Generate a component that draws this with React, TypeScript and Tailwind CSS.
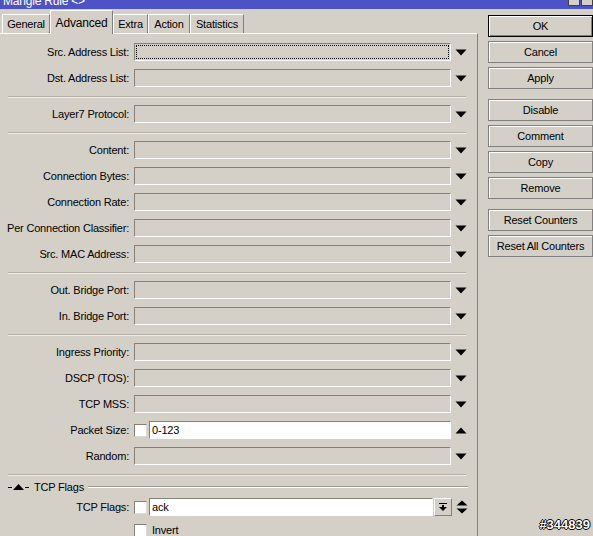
import React from "react";

const font = { fontFamily: '"Liberation Sans", Arial, sans-serif' };

function Arrow({ dir }: { dir: "down" | "up" | "updown" }) {
  if (dir === "updown") {
    return (
      <svg width="12" height="14" viewBox="0 0 12 14" className="ml-[4px]">
        <polygon points="0.5,5.5 11.5,5.5 6,0.5" fill="#000" />
        <polygon points="0.5,8.5 11.5,8.5 6,13.5" fill="#000" />
      </svg>
    );
  }
  return (
    <svg width="12" height="7" viewBox="0 0 12 7" className="ml-[4px]">
      {dir === "down" ? (
        <polygon points="0.5,0.5 11.5,0.5 6,6.5" fill="#000" />
      ) : (
        <polygon points="0.5,6.5 11.5,6.5 6,0.5" fill="#000" />
      )}
    </svg>
  );
}

function Box({ width, white, focus, value }: { width: number; white?: boolean; focus?: boolean; value?: string }) {
  return (
    <div
      className={
        "relative h-[18px] border border-t-[#848179] border-l-[#848179] border-b-white border-r-white flex items-center pl-[2px] " +
        (white ? "bg-white" : "bg-[#d4d0c8]")
      }
      style={{ width }}
    >
      {focus && <div className="absolute inset-[1px] border border-dotted border-black" />}
      {value && <span className="text-[11px] leading-none text-black">{value}</span>}
    </div>
  );
}

function Check() {
  return <div className="w-[13px] h-[13px] bg-white border border-t-[#848179] border-l-[#848179] border-b-[#dcdad5] border-r-[#dcdad5]" />;
}

function Row({
  label,
  arrow = "down",
  focus,
  check,
  white,
  value,
}: {
  label: string;
  arrow?: "down" | "up" | "updown";
  focus?: boolean;
  check?: boolean;
  white?: boolean;
  value?: string;
}) {
  return (
    <div className="flex items-center h-[26px]">
      <div className="w-[129px] text-right text-[11px] whitespace-nowrap">{label}:</div>
      <div className="ml-[5px] flex items-center">
        {check ? (
          <>
            <Check />
            <div className="ml-[2px]">
              <Box width={302} white={white} value={value} />
            </div>
          </>
        ) : (
          <Box width={317} focus={focus} />
        )}
        <Arrow dir={arrow} />
      </div>
    </div>
  );
}

function Sep() {
  return (
    <div className="h-[10px] pt-[5px] pl-[8px]">
      <div className="w-[458px] h-px bg-[#b3afa7]" />
      <div className="w-[458px] h-px bg-[#eeece8]" />
    </div>
  );
}

function Btn({ label, def, className = "" }: { label: string; def?: boolean; className?: string }) {
  return (
    <div
      className={
        "w-[105px] h-[22px] flex items-center justify-center text-[11px] " +
        (def
          ? "border border-black shadow-[inset_1px_1px_0_#fff,inset_-1px_-1px_0_#808080]"
          : "border border-[#808080] shadow-[inset_1px_1px_0_#fff]") +
        " " +
        className
      }
    >
      {label}
    </div>
  );
}

const tabs = [
  { name: "General", w: 48 },
  { name: "Advanced", w: 63, active: true },
  { name: "Extra", w: 35 },
  { name: "Action", w: 42 },
  { name: "Statistics", w: 54 },
];

export default function App() {
  return (
    <div className="relative w-[593px] h-[536px] overflow-hidden bg-[#d4d0c8] text-black tracking-[-0.2px]" style={font}>
      {/* title bar */}
      <div className="h-[9px] bg-[#4d53c6] overflow-hidden flex justify-between">
        <div className="text-[12px] text-white leading-[14px] mt-[-6px] ml-[3px]">Mangle Rule &lt;&gt;</div>
        <div className="flex gap-[1px] mt-[-6px]">
          <div className="w-[12px] h-[12px] bg-[#d4d0c8] border border-[#404040]" />
          <div className="w-[12px] h-[12px] bg-[#d4d0c8] border border-[#404040]" />
        </div>
      </div>

      <div className="flex">
        {/* left: tabs + panel */}
        <div className="w-[478px]">
          <div className="flex items-end h-[24px] pl-[2px]">
            {tabs.map((t) =>
              t.active ? (
                <div
                  key={t.name}
                  className="relative z-10 h-[24px] -mb-px bg-[#d4d0c8] border-t border-l border-white border-r border-r-[#808080] flex items-start justify-center pt-[3px] text-[12px]"
                  style={{ width: t.w }}
                >
                  {t.name}
                </div>
              ) : (
                <div
                  key={t.name}
                  className="h-[19px] border-t border-l border-white border-r border-r-[#808080] flex items-center justify-center text-[11px]"
                  style={{ width: t.w }}
                >
                  {t.name}
                </div>
              )
            )}
          </div>
          <div className="border-t border-white border-r border-r-[#808080] h-[520px] pt-[5px]">
            <Row label="Src. Address List" focus />
            <Row label="Dst. Address List" />
            <Sep />
            <Row label="Layer7 Protocol" />
            <Sep />
            <Row label="Content" />
            <Row label="Connection Bytes" />
            <Row label="Connection Rate" />
            <Row label="Per Connection Classifier" />
            <Row label="Src. MAC Address" />
            <Sep />
            <Row label="Out. Bridge Port" />
            <Row label="In. Bridge Port" />
            <Sep />
            <Row label="Ingress Priority" />
            <Row label="DSCP (TOS)" />
            <Row label="TCP MSS" />
            <Row label="Packet Size" check white value="0-123" arrow="up" />
            <Row label="Random" />
            <Sep />
            {/* TCP Flags group */}
            <div className="flex items-center h-[16px] pl-[8px] text-[11px]">
              <div className="flex items-center">
                <div className="w-[4px] h-px bg-black" />
                <svg width="11" height="6" viewBox="0 0 11 6" className="mx-[1px]">
                  <polygon points="0,6 11,6 5.5,0" fill="#000" />
                </svg>
                <div className="w-[4px] h-px bg-black" />
              </div>
              <span className="ml-[5px]">TCP Flags</span>
              <div className="ml-[4px] w-[380px]">
                <div className="h-px bg-[#9c9890]" />
                <div className="h-px bg-white" />
              </div>
            </div>
            <div className="flex items-center h-[24px]">
              <div className="w-[129px] text-right text-[11px]">TCP Flags:</div>
              <div className="ml-[5px] flex items-center">
                <Check />
                <div className="ml-[2px]">
                  <Box width={284} white value="ack" />
                </div>
                <div className="ml-px w-[18px] h-[18px] border border-t-white border-l-white border-b-[#808080] border-r-[#808080] flex items-center justify-center">
                  <svg width="8" height="9" viewBox="0 0 8 9">
                    <rect x="0" y="0" width="8" height="1" fill="#000" />
                    <rect x="3" y="2" width="2" height="3" fill="#000" />
                    <polygon points="0,4 8,4 4,8" fill="#000" />
                  </svg>
                </div>
                <Arrow dir="updown" />
              </div>
            </div>
            <div className="flex items-center h-[22px] pl-[134px] text-[11px]">
              <Check />
              <span className="ml-[5px]">Invert</span>
            </div>
          </div>
        </div>

        {/* right: buttons */}
        <div className="ml-[10px] mt-[6px] flex flex-col gap-[4px]">
          <Btn label="OK" def />
          <Btn label="Cancel" />
          <Btn label="Apply" />
          <Btn label="Disable" className="mt-[6px]" />
          <Btn label="Comment" />
          <Btn label="Copy" />
          <Btn label="Remove" />
          <Btn label="Reset Counters" className="mt-[6px]" />
          <Btn label="Reset All Counters" />
        </div>
      </div>

      <div
        className="absolute right-[3px] bottom-[2px] text-[13px] font-bold text-white tracking-normal"
        style={{ textShadow: "1px 0 0 #000, -1px 0 0 #000, 0 1px 0 #000, 0 -1px 0 #000" }}
      >
        #344839
      </div>
    </div>
  );
}
